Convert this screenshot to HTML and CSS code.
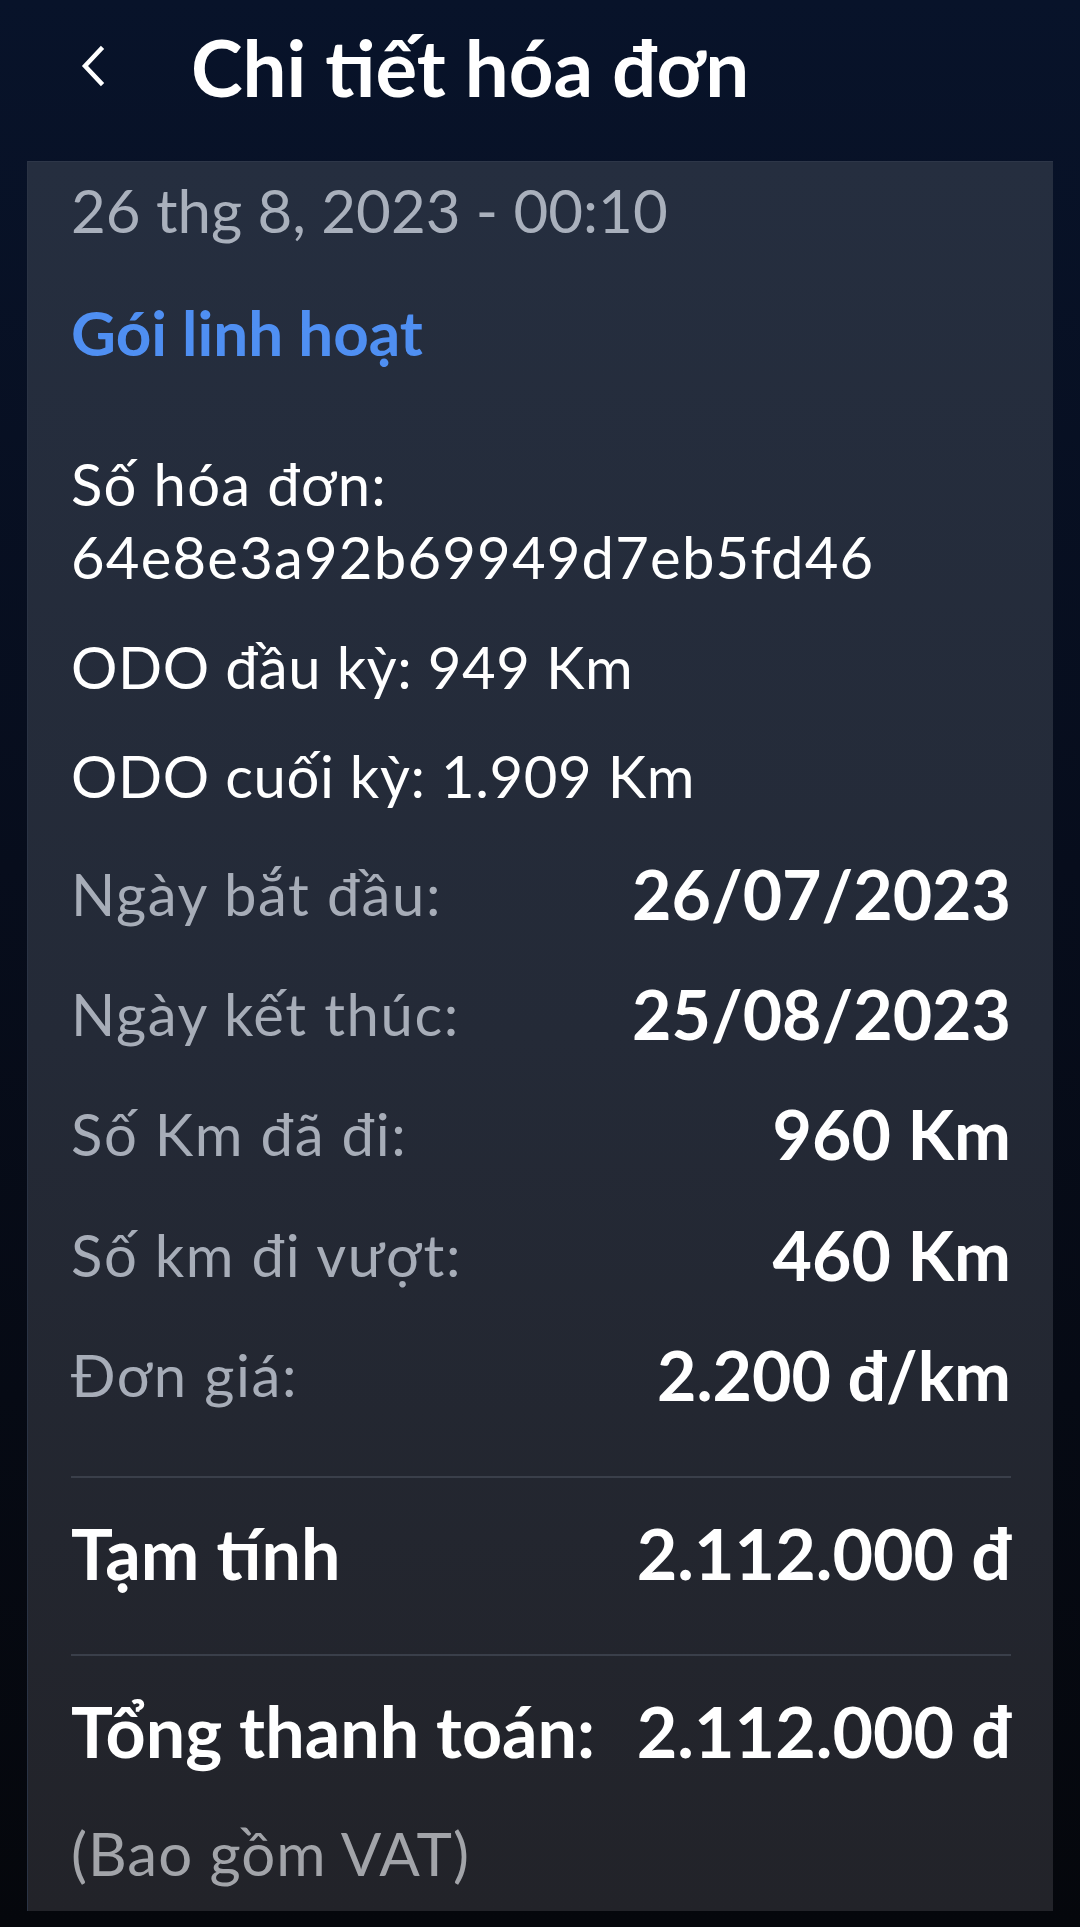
FILE: index.html
```html
<!DOCTYPE html>
<html lang="vi">
<head>
    <meta charset="UTF-8">
    <meta name="viewport" content="width=device-width, initial-scale=1.0">
    <title>Chi tiết hóa đơn</title>
    <link rel="stylesheet" href="styles.css">
</head>
<body>

    <header class="topbar">
        <a class="back-btn" href="#" aria-label="Quay lại">
            <svg width="26" height="42" viewBox="0 0 26 42">
                <polyline points="21,4 5,21 21,38" fill="none" stroke="#fff" stroke-width="4.5" stroke-linecap="square" stroke-linejoin="miter"/>
            </svg>
        </a>
        <h1 class="page-title">Chi tiết hóa đơn</h1>
    </header>

    <div class="invoice-card">
        <div class="invoice-date">26 thg 8, 2023 - 00:10</div>
        <div class="plan-name">Gói linh hoạt</div>

        <div class="invoice-no">Số hóa đơn:<br>64e8e3a92b69949d7eb5fd46</div>
        <div class="odo">ODO đầu kỳ: 949 Km</div>
        <div class="odo">ODO cuối kỳ: 1.909 Km</div>

        <div class="detail-list">
            <div class="detail-row">
                <span class="detail-label">Ngày bắt đầu:</span>
                <span class="detail-value">26/07/2023</span>
            </div>
            <div class="detail-row">
                <span class="detail-label">Ngày kết thúc:</span>
                <span class="detail-value">25/08/2023</span>
            </div>
            <div class="detail-row">
                <span class="detail-label">Số Km đã đi:</span>
                <span class="detail-value">960 Km</span>
            </div>
            <div class="detail-row">
                <span class="detail-label">Số km đi vượt:</span>
                <span class="detail-value">460 Km</span>
            </div>
            <div class="detail-row">
                <span class="detail-label">Đơn giá:</span>
                <span class="detail-value">2.200 đ/km</span>
            </div>
        </div>

        <hr class="divider">

        <div class="total-row subtotal">
            <span>Tạm tính</span>
            <span>2.112.000 đ</span>
        </div>

        <hr class="divider second">

        <div class="total-row grand-total">
            <span>Tổng thanh toán:</span>
            <span>2.112.000 đ</span>
        </div>

        <div class="vat-note">(Bao gồm VAT)</div>
    </div>

</body>
</html>
```

FILE: styles.css
```css
* {
    margin: 0;
    padding: 0;
    box-sizing: border-box;
}

html, body {
    height: 100%;
}

body {
    font-family: Lato, "Open Sans", sans-serif;
    background: linear-gradient(to bottom, #08132a 0%, #070d1c 45%, #05070c 100%);
    color: #fff;
    overflow: hidden;
}

/* header */
.topbar {
    height: 161px;
    display: flex;
    align-items: flex-start;
    padding: 28px 0 0 80px;
}

.back-btn {
    display: block;
    margin-top: 17px;
    width: 26px;
    height: 42px;
}

.back-btn svg {
    display: block;
}

.page-title {
    margin-left: 85px;
    font-size: 78px;
    font-weight: 700;
    line-height: 78px;
    color: #fff;
}

/* card */
.invoice-card {
    margin: 0 27px;
    padding: 12px 42px 22px 43px;
    background: linear-gradient(to bottom, #252e3f 0%, #242a37 50%, #222329 100%);
    border-top: 1px solid #2d3648;
    border-left: 1px solid #2a3344;
    line-height: 1.2;
}

.invoice-date {
    font-size: 60px;
    color: #a9b0bc;
}

.plan-name {
    margin-top: 49px;
    font-size: 62px;
    font-weight: 700;
    color: #4f8ff2;
}

.invoice-no {
    margin-top: 78px;
    font-size: 58px;
    line-height: 73px;
    letter-spacing: 1.2px;
    color: #fff;
}

.odo {
    margin-top: 39px;
    font-size: 58px;
    letter-spacing: 0.6px;
    color: #fff;
}

.detail-list {
    margin-top: 42px;
    display: flex;
    flex-direction: column;
    gap: 38.8px;
}

.detail-row {
    display: flex;
    justify-content: space-between;
    align-items: center;
}

.detail-label {
    font-size: 58px;
    letter-spacing: 1.6px;
    color: #a7adb8;
}

.detail-value {
    font-size: 68px;
    font-weight: 700;
    color: #fff;
}

.divider {
    border: none;
    height: 2px;
    background: #3a3f4a;
    margin-top: 60px;
}

.divider.second {
    margin-top: 59px;
}

.total-row {
    display: flex;
    justify-content: space-between;
    align-items: baseline;
    margin-top: 33px;
    font-size: 70px;
    font-weight: 700;
    color: #fff;
}

.vat-note {
    margin-top: 44px;
    font-size: 60px;
    letter-spacing: 1px;
    color: #a2a4a9;
}
```
